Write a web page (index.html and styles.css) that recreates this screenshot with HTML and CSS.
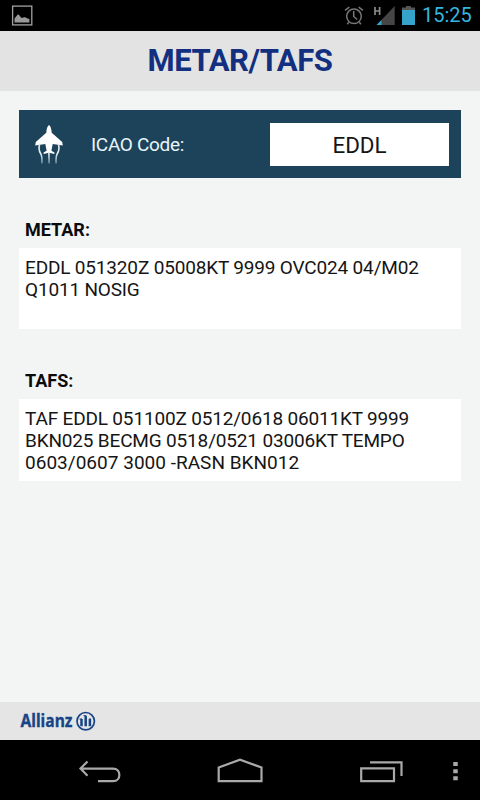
FILE: index.html
```html
<!DOCTYPE html>
<html lang="en">
<head>
<meta charset="utf-8">
<title>METAR/TAFS</title>
<link rel="stylesheet" href="styles.css">
</head>
<body>
<div class="screen">
  <div class="status">
    <svg class="picture" width="22" height="22" viewBox="0 0 22 22"><rect x="1.6" y="1.1" width="19.2" height="18.8" fill="none" stroke="#a2a2a2" stroke-width="1.3"/><path d="M3.5 17.5v-4l3.3-3.9c1.500-.5 2.500 2.900 4 3.500 1.500-.2 3.500-1.700 5 .1l2.600.9v3.400z" fill="#999"/></svg>
    <svg class="indicators" width="78" height="31" viewBox="0 0 78 31">
      <g fill="none" stroke="#777" stroke-width="1.5"><circle cx="13" cy="16.3" r="7.3"/><path d="M12.700 11v5.500l3.400 3M4 10.400l4.300-3.200M17.700 7.200l4.300 3.200M7.700 22.200l-1.400 2M18.400 22.200l1.400 2"/></g>
      <path d="M34 7v8M38.600 7v8M34 11h4.600" stroke="#8a8a8a" stroke-width="1.7"/>
      <path d="M53.700 6v19h-18z" fill="#464646"/><path d="M40.500 20v5h-5z" fill="#35a4cb"/>
      <path d="M61 7.500h4V6h5v1.500h4V25H61z" fill="#555"/><path d="M61 10h13v15H61z" fill="#36a3ca"/>
    </svg>
    <span class="clock">15:25</span>
  </div>
  <header class="header"><h1>METAR/TAFS</h1></header>
  <main class="content">
    <section class="search">
      <svg class="plane" width="32" height="42" viewBox="0 0 32 42">
        <path fill="#fff" d="M15 1c1.800 1.400 2.500 4 2.700 7.800l10.500 9.200.6 3.600-10.100-1.500-1.300 6.600 3 1.900v1.400L15 28.800l-5.400 1.200v-1.400l3-1.900-1.300-6.600-10.100 1.500.6-3.600 10.500-9.200C12.500 5 13.200 2.400 15 1z"/>
        <g fill="none" stroke="url(#trail)" stroke-width="1.6"><path d="M5.500 21c-1.500 4.500 0 6.500 1.600 9.500 1 2.500 1 5 .8 9M24.500 21c1.500 4.500 0 6.500-1.600 9.500-1 2.500-1 5-.8 9M14.900 28l.2 11.500"/></g>
        <defs><linearGradient id="trail" gradientUnits="userSpaceOnUse" x1="0" y1="20" x2="0" y2="40"><stop offset=".5" stop-color="#e4eef3"/><stop offset="1" stop-color="#e4eef3" stop-opacity=".35"/></linearGradient></defs>
      </svg>
      <label class="label" for="icao">ICAO Code:</label>
      <div class="field" id="icao">EDDL</div>
    </section>
    <h2 class="metar-title">METAR:</h2>
    <section class="report metar"><div>EDDL 051320Z 05008KT 9999 OVC024 04/M02</div><div>Q1011 NOSIG</div></section>
    <h2 class="tafs-title">TAFS:</h2>
    <section class="report"><div>TAF EDDL 051100Z 0512/0618 06011KT 9999</div><div>BKN025 BECMG 0518/0521 03006KT TEMPO</div><div class="last-line">0603/0607 3000 -RASN BKN012</div></section>
  </main>
  <footer class="footer">
    <svg width="78" height="24" viewBox="0 0 78 24">
      <text class="brand" x="0.500" y="18" textLength="52" lengthAdjust="spacingAndGlyphs">Allianz</text>
      <circle cx="65.700" cy="12.200" r="8.700" fill="none" stroke="#174486" stroke-width="1.700"/>
      <path d="M61.500 10v7.300M65.700 6.700v10.600M69.900 10v7.300" stroke="#174486" stroke-width="2.500"/><path d="M59.500 10h2.500M63.500 6.700h2.500M69 10h2" stroke="#174486" stroke-width="1"/>
    </svg>
  </footer>
  <nav class="nav">
    <svg width="480" height="60" viewBox="0 0 480 60" fill="none" stroke="#a9a9a9" stroke-width="2.200">
      <path d="M81 28.600h32c8.500 0 8.500 12.600 0 12.600H98M87.500 21.500l-7 7.100 7 7.100"/>
      <path d="M218.700 41.200V27.500L240 19.700l21.500 7.800v13.700z"/>
      <path d="M361.200 28.300h32.800v12.900h-32.800zM370 22.300h31.500V36"/>
      <path d="M455.500 22v4M455.500 29.200v4M455.500 36.300v4" stroke-width="4.500"/>
    </svg>
  </nav>
</div>
</body>
</html>
```
FILE: styles.css
```css
* { box-sizing: border-box; }
body { margin: 0; font-family: Roboto, sans-serif; color: #151515; }
.screen { width: 480px; height: 800px; display: flex; flex-direction: column; background: #f3f5f5; }
.status { height: 31px; flex: none; background: #000; display: flex; align-items: center; padding: 0 8px 0 11px; }
.picture { margin-top: 1px; }
.indicators { margin-left: auto; }
.clock { font-size: 20px; line-height: 33px; color: #35b5df; width: 51px; margin-left: 3px; white-space: nowrap; margin-right: -1px; }
.header { height: 60px; flex: none; background: #e3e3e3; text-align: center; }
h1 { margin: 0; font-size: 31px; line-height: 59px; font-weight: 700; letter-spacing: -.42px; color: #12307f; }
.content { flex: 1; padding: 19px 19px 0; }
.search { height: 68px; background: #1d435b; display: flex; align-items: center; padding: 0 12px 0 15px; }
.plane { flex: none; margin-top: 1px; }
.label { color: #e9f5fa; font-size: 19px; margin-left: 25px; white-space: nowrap; letter-spacing: -.32px; }
.field { width: 179px; height: 43px; margin-left: auto; background: #fff; font-size: 22.4px; line-height: 45px; text-align: center; }
h2 { margin: 0; padding-left: 6px; font-size: 18px; line-height: 22px; font-weight: 700; color: #0b0b0b; }
.metar-title { margin-top: 41px; margin-bottom: 7px; }
.tafs-title { margin-top: 41px; margin-bottom: 7px; }
.report { height: 82px; background: #fff; padding: 9px 6px; font-size: 19px; line-height: 22px; letter-spacing: -.17px; white-space: nowrap; }
.metar { height: 81px; }
.last-line { letter-spacing: .02px; }
.footer { height: 38px; flex: none; background: #e5e5e5; padding: 7px 20px; }
.brand { font: 700 17px "Noto Sans", sans-serif; fill: #174486; stroke: #174486; stroke-width: .3px; }
.nav { height: 60px; flex: none; background: #000; }
svg { display: block; }
```
